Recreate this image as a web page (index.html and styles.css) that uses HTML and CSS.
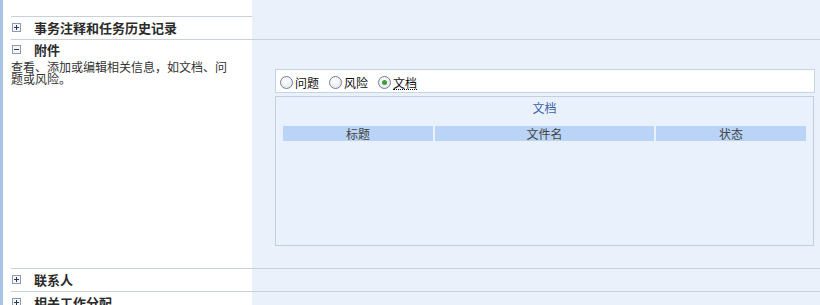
FILE: index.html
```html
<!DOCTYPE html>
<html lang="zh-CN">
<head>
  <meta charset="UTF-8" />
  <title>附件</title>
  <link rel="stylesheet" href="styles.css">
</head>
<body>
  <div class="page">
    <div class="row spacer">
      <div class="label"></div>
      <div class="field"></div>
    </div>

    <div class="row">
      <div class="label">
        <div class="section-head">
          <svg class="toggle" width="9" height="9" viewBox="0 0 9 9"><rect x="0.5" y="0.5" width="8" height="8" fill="#f4f6f9" stroke="#8b9bb2"/><path d="M2 4.5h5M4.5 2v5" stroke="#2a3a55" stroke-width="1"/></svg>
          <span>事务注释和任务历史记录</span>
        </div>
      </div>
      <div class="field"></div>
    </div>

    <div class="row">
      <div class="label">
        <div class="section-head open">
          <svg class="toggle" width="9" height="9" viewBox="0 0 9 9"><rect x="0.5" y="0.5" width="8" height="8" fill="#f4f6f9" stroke="#8b9bb2"/><path d="M2 4.5h5" stroke="#2a3a55" stroke-width="1"/></svg>
          <span>附件</span>
        </div>
        <p class="desc">查看、添加或编辑相关信息，如文档、问题或风险。</p>
      </div>
      <div class="field attach">
        <div class="choices">
          <label class="choice"><span class="radio"></span>问题</label>
          <label class="choice"><span class="radio"></span>风险</label>
          <label class="choice"><span class="radio checked"></span><span class="focus">文档</span></label>
        </div>
        <div class="panel">
          <div class="panel-title">文档</div>
          <div class="grid-head">
            <div>标题</div>
            <div>文件名</div>
            <div>状态</div>
          </div>
        </div>
      </div>
    </div>

    <div class="row">
      <div class="label">
        <div class="section-head">
          <svg class="toggle" width="9" height="9" viewBox="0 0 9 9"><rect x="0.5" y="0.5" width="8" height="8" fill="#f4f6f9" stroke="#8b9bb2"/><path d="M2 4.5h5M4.5 2v5" stroke="#2a3a55" stroke-width="1"/></svg>
          <span>联系人</span>
        </div>
      </div>
      <div class="field"></div>
    </div>

    <div class="row">
      <div class="label">
        <div class="section-head">
          <svg class="toggle" width="9" height="9" viewBox="0 0 9 9"><rect x="0.5" y="0.5" width="8" height="8" fill="#f4f6f9" stroke="#8b9bb2"/><path d="M2 4.5h5M4.5 2v5" stroke="#2a3a55" stroke-width="1"/></svg>
          <span>相关工作分配</span>
        </div>
      </div>
      <div class="field"></div>
    </div>
  </div>
</body>
</html>
```

FILE: styles.css
```css
body {
  margin: 0;
  padding: 0;
  background: white;
  font-family: "Noto Sans CJK SC", "DejaVu Sans", sans-serif;
  font-size: 12px;
  color: #222;
  overflow: hidden;
}

.page {
  border-left: 3px solid #a9c2e6;
  min-height: 305px;
  background: white;
}

.row {
  display: flex;
  margin-left: 8px;
  border-top: 1px solid #c9d0da;
}

.row.spacer {
  border-top: none;
  height: 16px;
}

.label {
  width: 241px;
  flex-shrink: 0;
}

.field {
  flex: 1;
  background: #eaf1fb;
  min-height: 22px;
}

.section-head {
  display: flex;
  align-items: center;
  box-sizing: border-box;
  height: 22px;
  padding-bottom: 2px;
  font-size: 13px;
  font-weight: bold;
  color: #2b2b2b;
}

.section-head.open {
  height: 19px;
  padding-bottom: 1px;
}

.toggle {
  margin-left: 1px;
  margin-right: 13px;
}

.desc {
  margin: 2px 0 0 0;
  width: 222px;
  line-height: 12px;
  color: #333;
}

.field.attach {
  padding: 29px 5px 22px 23px;
}

.choices {
  display: flex;
  align-items: center;
  gap: 10px;
  height: 22px;
  background: white;
  border: 1px solid #c6d4e8;
  padding-left: 4px;
  color: #111;
}

.choice {
  display: flex;
  align-items: center;
  gap: 2px;
  padding-top: 3px;
}

.radio {
  width: 11px;
  height: 11px;
  border: 1px solid #6f7f95;
  border-radius: 50%;
  background: radial-gradient(circle at 40% 35%, #ffffff, #dfe3e8);
  display: flex;
  justify-content: center;
  align-items: center;
}

.radio.checked::after {
  content: '';
  width: 5px;
  height: 5px;
  border-radius: 50%;
  background: #3aa23a;
}

.focus {
  border-bottom: 1px dotted #111;
  line-height: 13px;
}

.panel {
  margin-top: 3px;
  margin-right: 1px;
  height: 148px;
  background: #e9f1fc;
  border: 1px solid #c2cfe0;
  padding: 0 7px;
}

.panel-title {
  text-align: center;
  color: #3b62a5;
  height: 22px;
  line-height: 22px;
}

.grid-head {
  display: grid;
  grid-template-columns: 150px 219px 150px;
  gap: 2px;
  margin-top: 7px;
}

.grid-head div {
  background: #bad4f8;
  height: 15px;
  line-height: 15px;
  text-align: center;
  color: #444;
}
```
